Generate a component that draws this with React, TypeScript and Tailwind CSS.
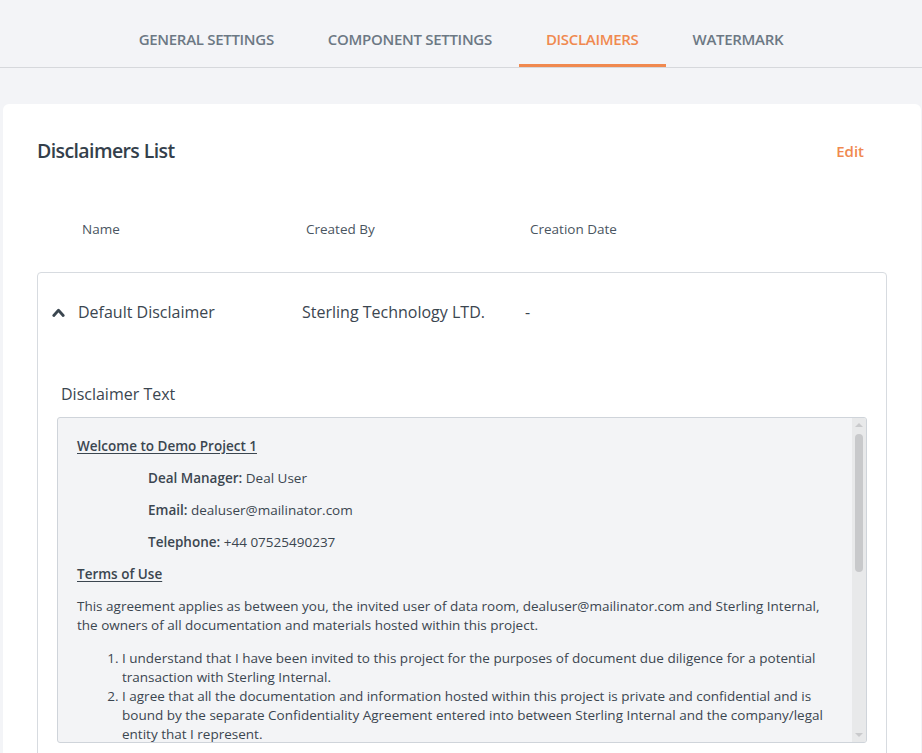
import React from "react";

const TABS = ["GENERAL SETTINGS", "COMPONENT SETTINGS", "DISCLAIMERS", "WATERMARK"];
const ACTIVE = "DISCLAIMERS";

function Tabs() {
  return (
    <div className="flex h-[68px] justify-center border-b border-[#d6d8dc]">
      {TABS.map((t) => (
        <div
          key={t}
          className={`flex items-center border-b-[3px] px-[27px] pt-[15px] text-[15px] font-semibold tracking-[-0.3px] ${
            t === ACTIVE ? "border-[#f0894f] text-[#f0894f]" : "border-transparent text-[#6c7884]"
          }`}
        >
          {t}
        </div>
      ))}
    </div>
  );
}

function FakeScrollbar() {
  return (
    <div className="flex w-[14px] shrink-0 flex-col items-center bg-[#e8e9ea]">
      <svg width="10" height="8" viewBox="0 0 10 8" className="mt-[3px]">
        <path d="M1 6 L5 2 L9 6 Z" fill="#c9cacc" />
      </svg>
      <div className="mt-[5px] h-[138px] w-[8px] rounded-full bg-[#c8c9cb]" />
      <div className="flex-1" />
      <svg width="10" height="8" viewBox="0 0 10 8" className="mb-[3px]">
        <path d="M1 2 L5 6 L9 2 Z" fill="#c9cacc" />
      </svg>
    </div>
  );
}

function DisclaimerBody() {
  return (
    <div className="flex h-[326px] overflow-hidden rounded-[3px] border border-[#cfd4da] bg-[#f3f4f6]">
      <div className="flex-1 overflow-hidden pl-[19px] pr-[20px] pt-[19px] text-[13.5px] leading-[19px] text-[#3b4650]">
        <p className="mb-[13px] font-semibold underline underline-offset-[2px]">Welcome to Demo Project 1</p>
        <p className="mb-[13px] pl-[71px]">
          <span className="font-semibold">Deal Manager:</span> Deal User
        </p>
        <p className="mb-[13px] pl-[71px]">
          <span className="font-semibold">Email:</span> dealuser@mailinator.com
        </p>
        <p className="mb-[13px] pl-[71px]">
          <span className="font-semibold">Telephone:</span> +44 07525490237
        </p>
        <p className="mb-[13px] font-semibold underline underline-offset-[2px]">Terms of Use</p>
        <p className="mb-[14px]">
          This agreement applies as between you, the invited user of data room, dealuser@mailinator.com and Sterling
          Internal, the owners of all documentation and materials hosted within this project.
        </p>
        <ol className="list-decimal pl-[45px]">
          <li>
            I understand that I have been invited to this project for the purposes of document due diligence for a
            potential transaction with Sterling Internal.
          </li>
          <li>
            I agree that all the documentation and information hosted within this project is private and confidential
            and is bound by the separate Confidentiality Agreement entered into between Sterling Internal and the
            company/legal entity that I represent.
          </li>
          <li>
            I agree not to copy, distribute or disclose any of the documentation hosted within this project to any
            third party.
          </li>
        </ol>
      </div>
      <FakeScrollbar />
    </div>
  );
}

export default function App() {
  return (
    <div className="min-h-[753px] bg-[#f3f4f7] pb-[20px]" style={{ fontFamily: '"Open Sans", sans-serif' }}>
      <Tabs />
      <div className="ml-[3px] mr-[1px] mt-[36px] rounded-[6px] bg-white pb-[40px] pl-[34px] pr-[34px] pt-[33px]">
        <div className="flex items-center justify-between">
          <h2 className="text-[19.5px] font-semibold leading-[28px] tracking-[-0.6px] text-[#343f4b]">Disclaimers List</h2>
          <button className="mr-[23px] text-[15px] font-semibold text-[#f0894f]">Edit</button>
        </div>

        <div className="mt-[54px] flex pl-[45px] text-[13.5px] leading-[20px] text-[#4a5561]">
          <div className="w-[224px]">Name</div>
          <div className="w-[224px]">Created By</div>
          <div>Creation Date</div>
        </div>

        <div className="mt-[33px] rounded-[4px] border border-[#d7dbe0] px-[19px] pb-[20px]">
          <div className="flex h-[78px] items-center text-[16px] text-[#3b4650]">
            <svg width="26" height="14" viewBox="0 0 26 14" className="-ml-[5px] shrink-0">
              <path d="M1.8 10.5 L6.5 5.3 L11.2 10.5" fill="none" stroke="#3b4650" strokeWidth="2.8" strokeLinecap="round" strokeLinejoin="round" />
            </svg>
            <div className="w-[224px]">Default Disclaimer</div>
            <div className="w-[223px]">Sterling Technology LTD.</div>
            <div>-</div>
          </div>
          <div className="mt-[31px] pl-[4px] text-[16px] leading-[24px] text-[#3b4650]">Disclaimer Text</div>
          <div className="mt-[11px]">
            <DisclaimerBody />
          </div>
        </div>
      </div>
    </div>
  );
}
